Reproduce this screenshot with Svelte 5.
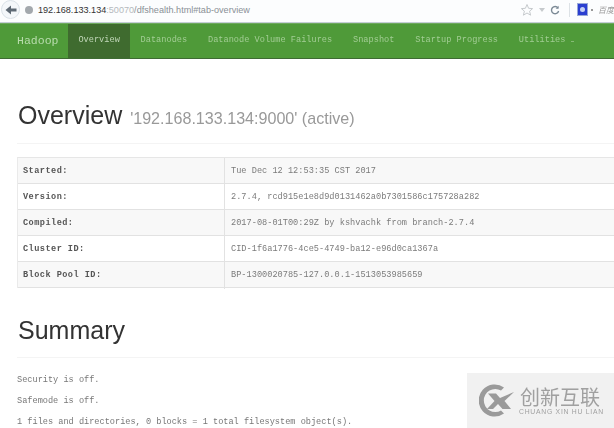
<script>
  const tabs = [
    ['Overview', true],
    ['Datanodes', false],
    ['Datanode Volume Failures', false],
    ['Snapshot', false],
    ['Startup Progress', false],
    ['Utilities', false]
  ];
  const rows = [
    ['Started:', 'Tue Dec 12 12:53:35 CST 2017'],
    ['Version:', '2.7.4, rcd915e1e8d9d0131462a0b7301586c175728a282'],
    ['Compiled:', '2017-08-01T00:29Z by kshvachk from branch-2.7.4'],
    ['Cluster ID:', 'CID-1f6a1776-4ce5-4749-ba12-e96d0ca1367a'],
    ['Block Pool ID:', 'BP-1300020785-127.0.0.1-1513053985659']
  ];
</script>

<div class="page">
  <header class="browser">
    <span class="back">
      <svg width="16" height="16" viewBox="0 0 16 16"><path d="M2.500 8 8 3.500V6.500h5.500v3H8v3z" fill="#5f6a75"/></svg>
    </span>
    <span class="globe"></span>
    <span class="url"><b>192.168.133.134</b><i>:50070</i>/dfshealth.html#tab-overview</span>
    <span class="tools">
      <svg width="14" height="14" viewBox="0 0 14 14"><path d="M7 1.500 8.600 5.300l4 .3-3 2.600 1 4L7 10l-3.600 2.200 1-4-3-2.600 4-.3z" fill="none" stroke="#c6cacd"/></svg>
      <span class="caret"></span>
      <svg width="10" height="10" viewBox="0 0 10 10"><path d="M8 3a3.600 3.600 0 1 0 .6 3" fill="none" stroke="#7c8a96" stroke-width="1.400"/><path d="M8.600 .8v3h-3z" fill="#7c8a96"/></svg>
      <span class="sep"></span>
      <span class="baidu"><span></span></span>
      <span class="dot"></span>
      <em>百度</em>
    </span>
  </header>

  <nav class="nav">
    <span class="brand">Hadoop</span>
    {#each tabs as [label, active]}
      <span class="tab" class:active>{label}</span>
    {/each}
    <span class="dropcaret"></span>
  </nav>

  <main class="content">
    <h1>Overview <small>'192.168.133.134:9000' (active)</small></h1>
    <div class="table">
      {#each rows as [k, v]}
        <div class="row">
          <div class="key">{k}</div>
          <div class="val">{v}</div>
        </div>
      {/each}
    </div>

    <h2>Summary</h2>
    <p>Security is off.</p>
    <p>Safemode is off.</p>
    <p>1 files and directories, 0 blocks = 1 total filesystem object(s).</p>
  </main>

  <aside class="mark">
    <svg width="35" height="33" viewBox="0 0 35 33">
      <path d="M25 3.500A16 16 0 1 0 25 29.500L22 26.500A11.500 11.500 0 1 1 22 6.500z" fill="#9a9a9a"/>
      <path d="M9 9.500h8l4 4.500 14-6-9.500 9L32 25h-8.500L19 20l-5 5H8l7.500-8z" fill="#9a9a9a"/>
    </svg>
    <div class="marktext">
      <strong>创新互联</strong>
      <span>CHUANG XIN HU LIAN</span>
    </div>
  </aside>
</div>

<style>
  :global(body) { margin: 0; background: #fff; }
  .page {
    position: relative;
    width: 614px;
    height: 428px;
    overflow: hidden;
    filter: blur(0.35px);
    font-family: "Liberation Mono", monospace;
  }
  .browser {
    height: 23px;
    box-sizing: border-box;
    padding-bottom: 3px;
    border-bottom: 1px solid #c4ced6;
    background: #fcfdfe;
    display: flex;
    align-items: center;
    font-family: "Liberation Sans", sans-serif;
  }
  .back { width: 19px; height: 19px; margin-left: 1px; display: flex; align-items: center; justify-content: center; border-radius: 50%; background: #f4f7fa; border: 1px solid #dbe2e8; box-sizing: border-box; }
  .globe { width: 8px; height: 8px; border-radius: 50%; background: #a3a8ad; margin: 0 5px 0 5px; }
  .url { font-size: 9.100px; color: #8a9096; flex: 1; }
  .url b { font-weight: 400; color: #333; }
  .url i { font-style: normal; color: #b5b9bd; }
  .tools { display: flex; align-items: center; gap: 5px; margin-right: 1px; }
  .caret { width: 0; height: 0; border: 3px solid transparent; border-top: 4px solid #c6cacd; border-bottom: 0; }
  .sep { width: 1px; height: 14px; background: #dde2e6; margin: 0 2px 0 4px; }
  .baidu { width: 9px; height: 11px; background: #2b3fd0; border: 1px solid #99a8d8; display: flex; align-items: center; justify-content: center; }
  .baidu span { width: 5px; height: 5px; border-radius: 50%; background: #c5d0f5; }
  .dot { width: 2px; height: 2px; background: #999; margin-left: -2px; }
  .tools em { font-size: 8px; color: #999; font-family: "Noto Sans CJK SC", sans-serif; margin-right: -1px; }

  .nav {
    height: 36px;
    box-sizing: border-box;
    background: #4f9a39;
    border-top: 1px solid #6ea95e;
    border-bottom: 1px solid #3e6b33;
    display: flex;
    align-items: stretch;
    color: #a2cd94;
    font-size: 8.600px;
    letter-spacing: 0.02px;
  }
  .brand {
    width: 68px;
    box-sizing: border-box;
    padding-left: 17px;
    font-size: 11.500px;
    line-height: 33px;
    color: #b9dcae;
  }
  .tab { padding: 0 10.400px; line-height: 33px; white-space: nowrap; }
  .tab.active { background: #3f6b2f; color: #c0d6b8; }
  .dropcaret {
    width: 3px;
    height: 1px;
    background: #86bb76;
    align-self: center;
    margin-left: -5px;
  }

  .content { padding: 0 0 0 17px; color: #777; }
  h1, h2 {
    margin: 0;
    font-family: "Liberation Sans", sans-serif;
    font-weight: 400;
    color: #333;
    font-size: 25px;
    text-indent: 1px;
  }
  h1 {
    padding-top: 41px;
    line-height: 30px;
    height: 85px;
    box-sizing: border-box;
    border-bottom: 1px solid #f4f4f4;
    margin-bottom: 13px;
    white-space: nowrap;
  }
  h1 small { font-size: 16.100px; color: #999; margin-left: 1px; }
  h2 {
    margin-top: 27px;
    line-height: 30px;
    height: 43px;
    box-sizing: border-box;
    border-bottom: 1px solid #f4f4f4;
    margin-bottom: 15px;
  }
  .table {
    width: 640px;
    border-top: 1px solid #e6e6e6;
    border-left: 1px solid #eaeaea;
  }
  .row {
    display: grid;
    grid-template-columns: 207px 1fr;
    height: 26px;
    box-sizing: border-box;
    border-bottom: 1px solid #e2e2e2;
    font-size: 8.600px;
    line-height: 27px;
    letter-spacing: 0.02px;
  }
  .row:nth-child(odd) { background: #f8f8f8; }
  .key { color: #555; font-weight: 700; padding-left: 5px; border-right: 1px solid #e2e2e2; letter-spacing: 0.45px; }
  .val { color: #7b7b7b; padding-left: 6px; white-space: nowrap; }
  p {
    margin: 0 0 7px;
    font-size: 8.600px;
    line-height: 14px;
    color: #777;
    white-space: nowrap;
  }

  .mark {
    position: absolute;
    left: 467px;
    top: 373px;
    width: 147px;
    height: 55px;
    background: #f1f1f1;
    display: flex;
    align-items: center;
    gap: 6px;
    padding: 0 0 0 12px;
    box-sizing: border-box;
  }
  .marktext { display: flex; flex-direction: column; align-items: flex-start; color: #a0a0a0; font-family: "Noto Sans CJK SC", sans-serif; margin-top: 2px; }
  .marktext strong { font-size: 20px; line-height: 20px; height: 20px; font-weight: 400; }
  .marktext span { font-family: "Liberation Sans", sans-serif; font-size: 6.800px; line-height: 8px; margin-top: 1px; margin-left: -1px; white-space: nowrap; letter-spacing: 0.75px; }
</style>
